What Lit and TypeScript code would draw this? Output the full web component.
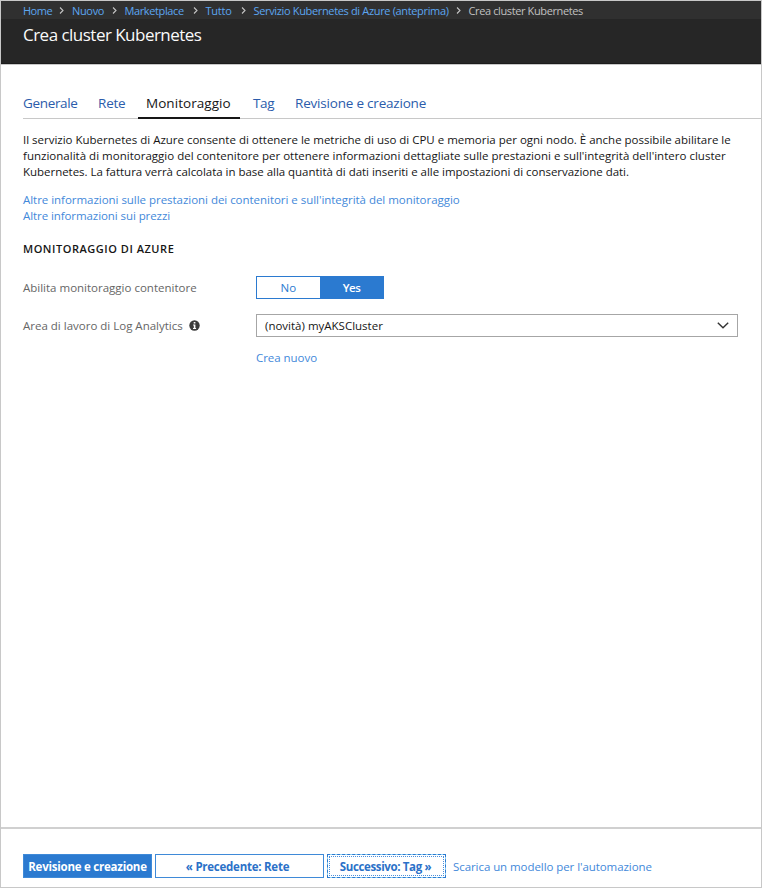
import { LitElement, html, css, svg } from "lit";
import { customElement, state } from "lit/decorators.js";

const chevron = html`<svg class="sep" viewBox="0 0 5 7" width="5" height="7">${svg`<path d="M1 .5 4 3.5 1 6.5" fill="none" stroke="#c4c4c4" stroke-width="1.1"/>`}</svg>`;

@customElement("app-root")
export class AppRoot extends LitElement {
  @state() private monitoring = true;

  static styles = css`
    * { box-sizing: border-box; }
    :host {
      display: flex;
      flex-direction: column;
      height: 888px;
      border: 1px solid #c8c8c8;
      box-sizing: border-box;
      background: #fff;
      color: #161616;
      font-family: "Open Sans", "Noto Sans", sans-serif;
      font-size: 11.5px;
      line-height: 16px;
      white-space: nowrap;
      overflow: hidden;
    }
    a { color: #4389da; text-decoration: none; }
    .crumbs {
      flex: none;
      display: flex;
      align-items: center;
      height: 18px;
      padding: 1px 0 0 22px;
      background: #303030;
      font-size: 11px;
      color: #c0c0c0;
    }
    .crumbs a { color: #5ca6f0; }
    .crumb { display: flex; flex: none; align-items: center; letter-spacing: -.38px; }
    .crumb.home { width: 49px; letter-spacing: -.5px; }
    .crumb.nuovo { width: 52.5px; letter-spacing: -.33px; }
    .crumb.market { width: 81px; }
    .crumb.tutto { width: 48px; letter-spacing: -.25px; }
    .crumb.service { width: 215px; letter-spacing: -.345px; }
    .sep { margin: 0 8px 0 auto; flex: none; }
    .title {
      flex: none;
      height: 45px;
      padding: 5px 0 0 22px;
      margin: 0;
      background: #262626;
      border-bottom: 1px solid #1c1c1c;
      color: #fafafa;
      font-size: 17px;
      font-weight: 400;
      line-height: 22px;
      letter-spacing: -.52px;
    }
    .main {
      flex: 1;
      border-top: 1px solid #c8c8c8;
      padding: 29px 0 0 22px;
    }
    .tabs {
      display: flex;
      height: 25px;
      border-bottom: 1px solid #c8c8c8;
      font-size: 13.5px;
      line-height: 18px;
    }
    .tab { color: #2b5cab; flex: none; letter-spacing: -.33px; }
    .t1 { width: 75px; }
    .t2 { width: 40px; letter-spacing: -.2px; }
    .t3 {
      width: 102px;
      height: 25px;
      padding-left: 8px;
      margin-right: 13px;
      border-bottom: 2px solid #161616;
      color: #161616;
      letter-spacing: .05px;
    }
    .t4 { width: 42px; letter-spacing: -.4px; }
    .t5 { letter-spacing: -.2px; }
    .intro { margin: 13px 0 12px; padding: 0; }
    .line { display: block; letter-spacing: -.008px; }
    .line.wide { letter-spacing: .014px; }
    .line.last { letter-spacing: -.03px; }
    .more { display: flex; flex-direction: column; align-items: flex-start; letter-spacing: -.034px; }
    .more .prices { letter-spacing: -.08px; }
    .section {
      margin: 17px 0 0;
      font-size: 11px;
      font-weight: 600;
      line-height: 16px;
      letter-spacing: .54px;
    }
    .form {
      display: grid;
      grid-template-columns: 233px 482px;
      grid-template-rows: 23px 23px 16px;
      row-gap: 15px;
      margin-top: 19px;
      align-items: center;
    }
    .label { display: flex; align-items: center; color: #666; }
    .info { margin-left: 6px; }
    .toggle { display: grid; grid-template-columns: 1fr 1fr; width: 128px; height: 23px; border: 1px solid #2b7ad0; }
    .choice {
      border: 0;
      padding: 0;
      background: #fff;
      color: #2b7ad0;
      font: inherit;
      line-height: 21px;
      letter-spacing: .2px;
    }
    .choice.on { background: #2b7ad0; color: #fff; font-weight: 600; letter-spacing: -.5px; }
    .select {
      display: flex;
      align-items: center;
      justify-content: space-between;
      height: 23px;
      padding: 0 8px;
      border: 1px solid #a6a6a6;
    }
    .create { grid-column: 2; margin-top: -4px; letter-spacing: -.04px; }
    .footer {
      flex: none;
      display: flex;
      height: 60px;
      padding: 25px 0 0 22px;
      border-top: 2px solid #d0d0d0;
    }
    .btn {
      flex: none;
      height: 24px;
      padding: 1px 0 0;
      border: 1px solid #3f8ad8;
      background: #fff;
      color: #2b71c8;
      font: 700 11.5px/21px "Open Sans", sans-serif;
      text-align: center;
    }
    .primary { width: 129px; background: #2b7ad0; color: #fff; letter-spacing: -.23px; margin-right: 3px; }
    .prev { width: 169px; letter-spacing: -.25px; padding-right: 4px; margin-right: 3px; }
    .next {
      width: 119px;
      padding-right: 2px;
      margin-right: 7px;
      border: 1px dashed #2b7ad0;
      outline: 1px dotted #4a8fdc;
      outline-offset: -3px;
      background: linear-gradient(#fff, #fff) padding-box, linear-gradient(#8fd0f6, #8fd0f6) border-box;
      letter-spacing: -.37px;
    }
    .download { line-height: 25px; letter-spacing: -.07px; }
  `;

  render() {
    return html`
      <nav class="crumbs">
        <span class="crumb home"><a>Home</a>${chevron}</span>
        <span class="crumb nuovo"><a>Nuovo</a>${chevron}</span>
        <span class="crumb market"><a>Marketplace</a>${chevron}</span>
        <span class="crumb tutto"><a>Tutto</a>${chevron}</span>
        <span class="crumb service"><a>Servizio Kubernetes di Azure (anteprima)</a>${chevron}</span>
        <span class="crumb">Crea cluster Kubernetes</span>
      </nav>
      <h1 class="title">Crea cluster Kubernetes</h1>
      <main class="main">
        <div class="tabs">
          <a class="tab t1">Generale</a>
          <a class="tab t2">Rete</a>
          <a class="tab t3">Monitoraggio</a>
          <a class="tab t4">Tag</a>
          <a class="tab t5">Revisione e creazione</a>
        </div>
        <p class="intro">
          <span class="line">Il servizio Kubernetes di Azure consente di ottenere le metriche di uso di CPU e memoria per ogni nodo. È anche possibile abilitare le</span>
          <span class="line wide">funzionalità di monitoraggio del contenitore per ottenere informazioni dettagliate sulle prestazioni e sull'integrità dell'intero cluster</span>
          <span class="line last">Kubernetes. La fattura verrà calcolata in base alla quantità di dati inseriti e alle impostazioni di conservazione dati.</span>
        </p>
        <div class="more">
          <a>Altre informazioni sulle prestazioni dei contenitori e sull'integrità del monitoraggio</a>
          <a class="prices">Altre informazioni sui prezzi</a>
        </div>
        <h2 class="section">MONITORAGGIO DI AZURE</h2>
        <div class="form">
          <span class="label">Abilita monitoraggio contenitore</span>
          <div class="toggle">
            <button class="choice ${this.monitoring ? "" : "on"}" @click=${() => (this.monitoring = false)}>No</button>
            <button class="choice ${this.monitoring ? "on" : ""}" @click=${() => (this.monitoring = true)}>Yes</button>
          </div>
          <span class="label">Area di lavoro di Log Analytics
            <svg class="info" width="11" height="11" viewBox="0 0 11 11">
              <circle cx="5.5" cy="5.5" r="5.2" fill="#3c3c3c" />
              <path d="M4.7 2h1.7v1.5H4.7zM4.1 4.4h2.3v3.5h.7v1H4v-1h.8V5.4h-.7z" fill="#fff" />
            </svg>
          </span>
          <div class="select">
            <span>(novità) myAKSCluster</span>
            <svg width="12" height="7" viewBox="0 0 12 7"><path d="M.8.8 6 5.8 11.2.8" fill="none" stroke="#333" stroke-width="1.4" /></svg>
          </div>
          <a class="create">Crea nuovo</a>
        </div>
      </main>
      <footer class="footer">
        <button class="btn primary">Revisione e creazione</button>
        <button class="btn prev">« Precedente: Rete</button>
        <button class="btn next">Successivo: Tag »</button>
        <a class="download">Scarica un modello per l'automazione</a>
      </footer>
    `;
  }
}
